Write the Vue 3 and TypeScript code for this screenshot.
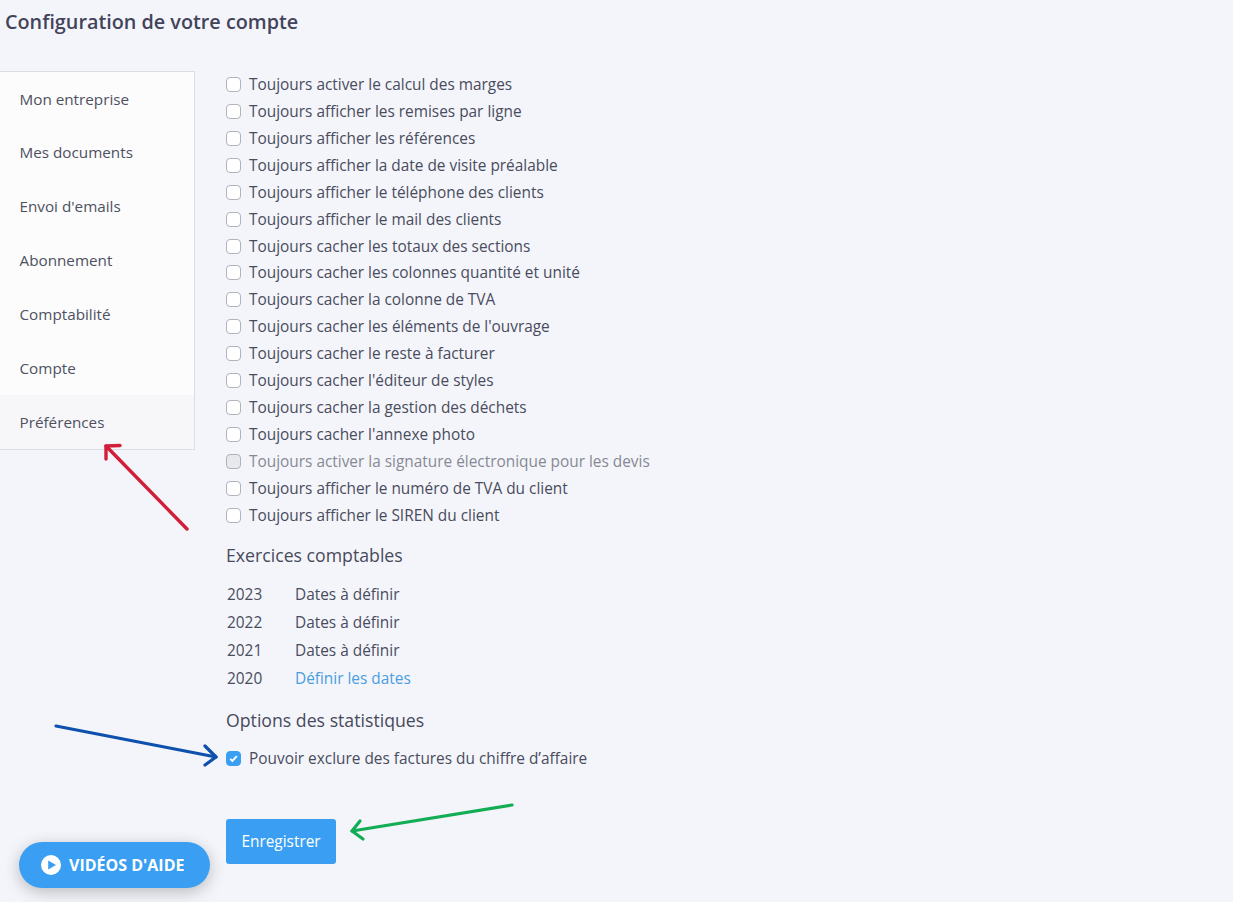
<script setup lang="ts">
const menu: string[] = ['Mon entreprise', 'Mes documents', "Envoi d'emails", 'Abonnement', 'Comptabilité', 'Compte', 'Préférences']
const options: { label: string; disabled?: boolean }[] = [
  { label: 'Toujours activer le calcul des marges' },
  { label: 'Toujours afficher les remises par ligne' },
  { label: 'Toujours afficher les références' },
  { label: 'Toujours afficher la date de visite préalable' },
  { label: 'Toujours afficher le téléphone des clients' },
  { label: 'Toujours afficher le mail des clients' },
  { label: 'Toujours cacher les totaux des sections' },
  { label: 'Toujours cacher les colonnes quantité et unité' },
  { label: 'Toujours cacher la colonne de TVA' },
  { label: "Toujours cacher les éléments de l'ouvrage" },
  { label: 'Toujours cacher le reste à facturer' },
  { label: "Toujours cacher l'éditeur de styles" },
  { label: 'Toujours cacher la gestion des déchets' },
  { label: "Toujours cacher l'annexe photo" },
  { label: 'Toujours activer la signature électronique pour les devis', disabled: true },
  { label: 'Toujours afficher le numéro de TVA du client' },
  { label: 'Toujours afficher le SIREN du client' },
]
const years: { year: string; text: string; link?: boolean }[] = [
  { year: '2023', text: 'Dates à définir' },
  { year: '2022', text: 'Dates à définir' },
  { year: '2021', text: 'Dates à définir' },
  { year: '2020', text: 'Définir les dates', link: true },
]
</script>

<template>
  <div class="page">
    <h1 class="title">Configuration de votre compte</h1>
    <div class="main">
      <nav class="side">
        <a v-for="(m, i) in menu" :key="m" class="item" :class="{ active: i === menu.length - 1 }">{{ m }}</a>
      </nav>
      <section class="content">
        <label v-for="o in options" :key="o.label" class="row" :class="{ disabled: o.disabled }">
          <span class="box"></span>
          <span>{{ o.label }}</span>
        </label>
        <h2 class="h2 first">Exercices comptables</h2>
        <div class="years">
          <div v-for="y in years" :key="y.year" class="year">
            <span class="y">{{ y.year }}</span>
            <span :class="{ link: y.link }">{{ y.text }}</span>
          </div>
        </div>
        <h2 class="h2 second">Options des statistiques</h2>
        <label class="row checked-row">
          <span class="box checked">
            <svg width="11" height="11" viewBox="0 0 11 11"><path d="M2.2 5.8 4.4 8 8.8 3.2" fill="none" stroke="#fff" stroke-width="1.9" /></svg>
          </span>
          <span>Pouvoir exclure des factures du chiffre d’affaire</span>
        </label>
        <button class="save" type="button">Enregistrer</button>
      </section>
    </div>
    <button class="help" type="button">
      <svg width="20" height="20" viewBox="0 0 20 20"><circle cx="10" cy="10" r="10" fill="#fff" /><path d="M7.2 5.4v9.2L15 10z" fill="#3a9ff2" /></svg>
      <span>VIDÉOS D'AIDE</span>
    </button>
    <svg class="notes" width="1233" height="902" viewBox="0 0 1233 902" fill="none" stroke-linecap="round" stroke-linejoin="round">
      <g stroke="#d11f3a" stroke-width="3.4">
        <path d="M187 529 106 446" />
        <path d="M120 445.5 106 446 106 459" />
      </g>
      <g stroke="#0e50ae" stroke-width="3.2">
        <path d="M56 726 216 757" />
        <path d="M205 746 216 757 205 765" />
      </g>
      <g stroke="#12ad55" stroke-width="3.2">
        <path d="M512 805 352 831" />
        <path d="M360 821 352 831 363 839" />
      </g>
    </svg>
  </div>
</template>

<style scoped>
.page {
  position: relative;
  height: 902px;
  overflow: hidden;
  background: #f4f5fa;
  color: #494c5d;
  font-family: "Open Sans", sans-serif;
  font-size: 15.4px;
}
.title {
  margin: 0;
  height: 71px;
  padding: 8px 0 0 5px;
  box-sizing: border-box;
  font-size: 19.8px;
  line-height: 27px;
  font-weight: 600;
  color: #43445a;
}
.main { display: flex; align-items: flex-start; }
.side {
  width: 195px;
  height: 379px;
  box-sizing: border-box;
  flex: none;
  display: flex;
  flex-direction: column;
  background: #fcfcfd;
  border: 1px solid #dcdde2;
  border-left: 0;
  font-size: 15.25px;
}
.item {
  flex: 1;
  display: flex;
  align-items: center;
  padding: 0 0 0.7px 19.5px;
  color: #4e5160;
}
.item.active { background: #f7f7f9; }
.content { margin-left: 31px; margin-top: -0.1px; display: flex; flex-direction: column; align-items: flex-start; }
.row {
  display: flex;
  align-items: center;
  gap: 8px;
  height: 26.94px;
  line-height: 27px;
  white-space: nowrap;
}
.row.disabled { color: #868995; }
.row.disabled .box { background: #e7e9ec; }
.box {
  width: 15px;
  height: 15px;
  flex: none;
  border: 1px solid #b0b3bb;
  border-radius: 4px;
  background: #fff;
  box-sizing: border-box;
  display: flex;
  align-items: center;
  justify-content: center;
}
.box.checked { background: #3a9ff2; border-color: #3a9ff2; }
.h2 { margin: 0; font-size: 17.7px; font-weight: 400; line-height: 25px; color: #474a5a; }
.first { margin-top: 14.1px; }
.years { margin-top: 13px; }
.year { display: flex; height: 28px; line-height: 28px; padding-left: 1px; }
.y { width: 68px; }
.link { color: #4a9de0; }
.second { margin-top: 15px; }
.checked-row { margin-top: 12px; }
.save {
  margin-top: 47px;
  width: 110px;
  height: 45px;
  border: 0;
  border-radius: 3px;
  background: #3a9ff2;
  color: #fff;
  font: 400 15.4px "Open Sans", sans-serif;
}
.help {
  position: absolute;
  left: 19px;
  top: 842px;
  width: 191px;
  height: 46px;
  border: 0;
  border-radius: 23px;
  background: #3a9ff2;
  color: #fff;
  display: flex;
  align-items: center;
  gap: 8px;
  padding: 0 0 0 22px;
  box-sizing: border-box;
  font: 700 16px "Open Sans", sans-serif;
  box-shadow: 0 4px 16px rgba(0, 0, 0, 0.24);
}
.notes { position: absolute; left: 0; top: 0; pointer-events: none; }
</style>
